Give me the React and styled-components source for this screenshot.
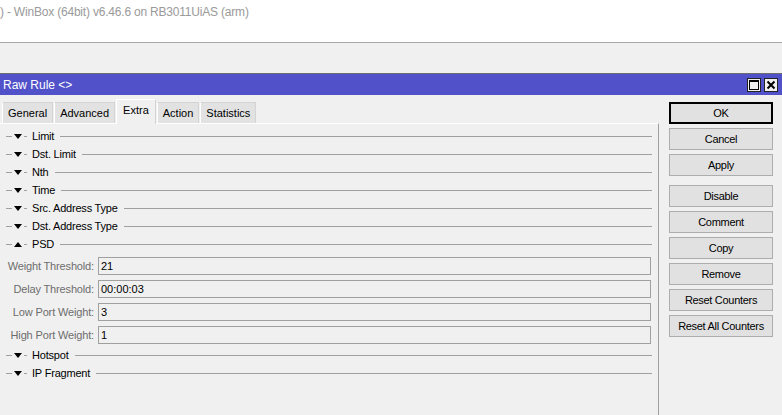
import React from "react";
import styled, { createGlobalStyle } from "styled-components";

const GlobalStyle = createGlobalStyle`
  html, body {
    margin: 0;
    padding: 0;
    background: #f0f0f0;
    font-family: "Liberation Sans", Arial, sans-serif;
    font-size: 11px;
    overflow: hidden;
  }
`;

const Page = styled.div`
  width: 782px;
  height: 415px;
  display: flex;
  flex-direction: column;
  background: #f0f0f0;
`;

const AppTitle = styled.div`
  height: 43px;
  background: #fff;
  border-bottom: 1px solid #a8a8a8;
  color: #9a9a9a;
  font-size: 12px;
  letter-spacing: -0.2px;
  padding: 5px 0 0 0;
  box-sizing: border-box;
  white-space: nowrap;
`;

const Toolbar = styled.div`
  height: 31px;
  background: #f0f0f0;
  border-bottom: 1px solid #6e6e6e;
  box-sizing: border-box;
`;

const TitleBar = styled.div`
  height: 21px;
  background: #5151c9;
  display: flex;
  align-items: center;
  justify-content: space-between;
  padding: 0 4px 0 3px;
  color: #fff;
  font-size: 12px;
`;

const WinControls = styled.div`
  display: flex;
  gap: 3px;
`;

const WinButton = styled.div`
  width: 14px;
  height: 14px;
  background: #f0f0f0;
  border: 1px solid #222;
  box-sizing: border-box;
  display: flex;
  align-items: center;
  justify-content: center;
`;

const Body = styled.div`
  flex: 1;
  display: flex;
`;

const Main = styled.div`
  width: 660px;
  display: flex;
  flex-direction: column;
`;

const TabStrip = styled.div`
  display: flex;
  align-items: flex-end;
  height: 28px;
  padding-left: 2px;
  gap: 1px;
`;

const Tab = styled.div`
  height: ${(p) => (p.active ? "25px" : "21px")};
  padding: 0 ${(p) => (p.active ? "6px" : "5px")};
  background: ${(p) => (p.active ? "#f0f0f0" : "#e2e2e2")};
  border: 1px solid #d4d4d4;
  border-left-color: #fff;
  border-top-color: ${(p) => (p.active ? "#fff" : "#d4d4d4")};
  border-bottom: none;
  box-sizing: border-box;
  display: flex;
  align-items: center;
  padding-bottom: ${(p) => (p.active ? "4px" : "0")};
  margin-bottom: ${(p) => (p.active ? "-1px" : "0")};
  position: relative;
  color: #000;
`;

const Panel = styled.div`
  flex: 1;
  border-top: 1px solid #fff;
  border-right: 1px solid #a0a0a0;
  padding-top: 3px;
  display: flex;
  flex-direction: column;
`;

const SectionRow = styled.div`
  height: 18px;
  display: flex;
  align-items: center;
  padding-right: 6px;
`;

const Lead = styled.div`
  width: 6px;
  height: 1px;
  background: #a0a0a0;
  margin-left: 6px;
`;

const Arrow = styled.div`
  width: 0;
  height: 0;
  margin-left: 2px;
  border-left: 4.5px solid transparent;
  border-right: 4.5px solid transparent;
  ${(p) =>
    p.open
      ? "border-bottom: 5px solid #000;"
      : "border-top: 5px solid #000;"}
`;

const Dash = styled.div`
  width: 3px;
  height: 1px;
  background: #a0a0a0;
  margin: 0 5px 0 2px;
`;

const SectionLabel = styled.span`
  color: #000;
  letter-spacing: -0.2px;
  white-space: nowrap;
`;

const Rule = styled.div`
  flex: 1;
  height: 1px;
  background: #a0a0a0;
  margin-left: 6px;
`;

const Fields = styled.div`
  margin-top: 1px;
  display: flex;
  flex-direction: column;
`;

const FieldRow = styled.div`
  height: 23px;
  display: flex;
  align-items: center;
  padding-right: 7px;
`;

const FieldLabel = styled.div`
  width: 98px;
  text-align: right;
  color: #6d6d6d;
  letter-spacing: -0.15px;
  white-space: nowrap;
  padding-right: 4px;
  box-sizing: border-box;
`;

const Input = styled.div`
  flex: 1;
  height: 18px;
  border: 1px solid #a0a0a0;
  box-sizing: border-box;
  background: #f0f0f0;
  display: flex;
  align-items: center;
  padding-left: 2px;
  color: #000;
`;

const ButtonColumn = styled.div`
  flex: 1;
  display: flex;
  flex-direction: column;
  padding: 7px 9px 0 10px;
  gap: 4px;
`;

const Button = styled.div`
  height: 22px;
  width: 104px;
  box-sizing: border-box;
  background: #e1e1e1;
  border: 1px solid ${(p) => (p.primary ? "#000" : "#adadad")};
  box-shadow: ${(p) => (p.primary ? "inset 0 0 0 1px #000" : "none")};
  display: flex;
  align-items: center;
  justify-content: center;
  color: #000;
  letter-spacing: -0.3px;
  white-space: nowrap;
  margin-top: ${(p) => (p.spaced ? "5px" : "0")};
`;

const sections = ["Limit", "Dst. Limit", "Nth", "Time", "Src. Address Type", "Dst. Address Type"];
const psdFields = [
  ["Weight Threshold:", "21"],
  ["Delay Threshold:", "00:00:03"],
  ["Low Port Weight:", "3"],
  ["High Port Weight:", "1"],
];
const tabs = ["General", "Advanced", "Extra", "Action", "Statistics"];
const buttons = ["OK", "Cancel", "Apply", "Disable", "Comment", "Copy", "Remove", "Reset Counters", "Reset All Counters"];

const Section = ({ label, open }) => (
  <SectionRow>
    <Lead />
    <Arrow open={open} />
    <Dash />
    <SectionLabel>{label}</SectionLabel>
    <Rule />
  </SectionRow>
);

export default function App() {
  return (
    <Page>
      <GlobalStyle />
      <AppTitle>) - WinBox (64bit) v6.46.6 on RB3011UiAS (arm)</AppTitle>
      <Toolbar />
      <TitleBar>
        <span>Raw Rule &lt;&gt;</span>
        <WinControls>
          <WinButton>
            <svg width="10" height="10" viewBox="0 0 10 10">
              <rect x="0.5" y="0.5" width="9" height="9" fill="none" stroke="#000" strokeWidth="1" />
              <line x1="0" y1="1.5" x2="10" y2="1.5" stroke="#000" strokeWidth="1" />
            </svg>
          </WinButton>
          <WinButton>
            <svg width="10" height="10" viewBox="0 0 10 10">
              <path d="M1.5 1.5 L8.5 8.5 M8.5 1.5 L1.5 8.5" stroke="#000" strokeWidth="2" />
            </svg>
          </WinButton>
        </WinControls>
      </TitleBar>
      <Body>
        <Main>
          <TabStrip>
            {tabs.map((t) => (
              <Tab key={t} active={t === "Extra"}>
                {t}
              </Tab>
            ))}
          </TabStrip>
          <Panel>
            {sections.map((s) => (
              <Section key={s} label={s} />
            ))}
            <Section label="PSD" open />
            <Fields>
              {psdFields.map(([label, value]) => (
                <FieldRow key={label}>
                  <FieldLabel>{label}</FieldLabel>
                  <Input>{value}</Input>
                </FieldRow>
              ))}
            </Fields>
            <Section label="Hotspot" />
            <Section label="IP Fragment" />
          </Panel>
        </Main>
        <ButtonColumn>
          {buttons.map((b) => (
            <Button key={b} primary={b === "OK"} spaced={b === "Disable"}>
              {b}
            </Button>
          ))}
        </ButtonColumn>
      </Body>
    </Page>
  );
}
